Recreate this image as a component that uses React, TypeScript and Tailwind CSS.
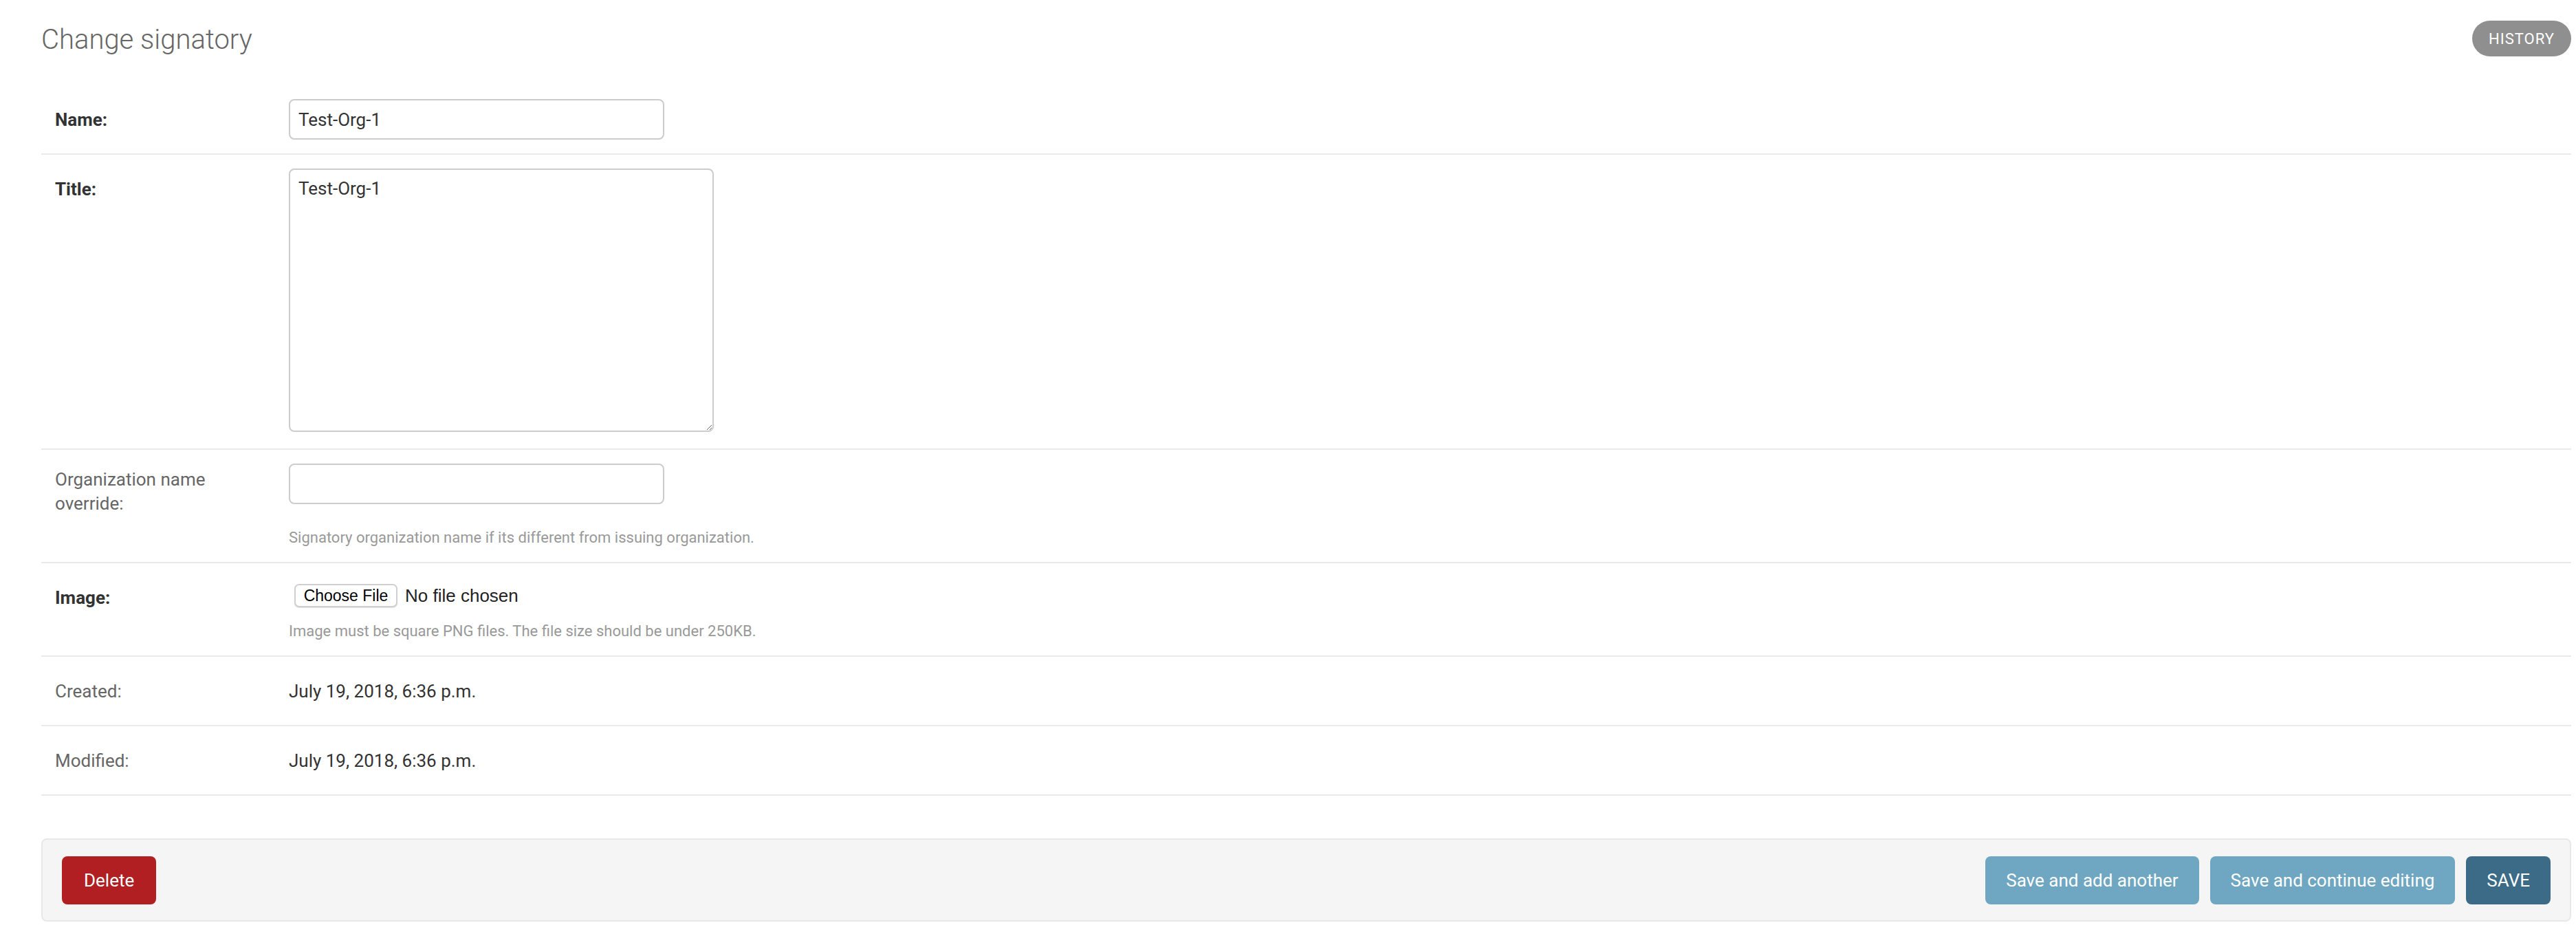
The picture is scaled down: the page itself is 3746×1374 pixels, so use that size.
const rowCls = "flex border-b-2 border-[#eaeaea] p-[20px]";
const labelCls = "w-[340px] shrink-0 pr-[20px] leading-[35px]";

function HelpText({ children, className }: { children: string; className: string }) {
  return <p className={`text-[22px] leading-[30px] text-[#999] ${className}`}>{children}</p>;
}

export default function App() {
  return (
    <div className="min-h-screen w-full bg-white pl-[60px] pr-[7px] pt-[30px] font-['Roboto',sans-serif] text-[26px] text-[#333]">
      <div className="flex items-start justify-between">
        <h1 className="mt-[4px] text-[40px] leading-[48px] font-light text-[#666]">Change signatory</h1>
        <a className="flex h-[52px] items-center rounded-full bg-[#8f8f8f] px-[24px] text-[22px] tracking-[1px] text-white uppercase">
          History
        </a>
      </div>

      <form className="mt-[42px]">
        <fieldset>
          <div className={rowCls}>
            <label className={`${labelCls} pt-[13px] font-bold text-[#333]`}>Name:</label>
            <input
              type="text"
              defaultValue="Test-Org-1"
              className="h-[59px] w-[546px] rounded-[8px] border-2 border-[#cccccc] px-[12px] text-[26px] text-[#333] outline-none"
            />
          </div>

          <div className={rowCls}>
            <label className={`${labelCls} pt-[13px] font-bold text-[#333]`}>Title:</label>
            <div className="h-[387px]">
              <textarea
                defaultValue="Test-Org-1"
                className="block h-[383px] w-[618px] rounded-[8px] border-2 border-[#cccccc] px-[12px] pt-[10px] text-[26px] leading-[34px] text-[#333] outline-none"
              />
            </div>
          </div>

          <div className={rowCls}>
            <label className={`${labelCls} pt-[6px] text-[#666]`}>Organization name override:</label>
            <div className="flex flex-col">
              <input
                type="text"
                className="h-[59px] w-[546px] rounded-[8px] border-2 border-[#cccccc] px-[12px] text-[26px] text-[#333] outline-none"
              />
              <HelpText className="mt-[34px]">Signatory organization name if its different from issuing organization.</HelpText>
            </div>
          </div>

          <div className={rowCls}>
            <label className={`${labelCls} pt-[13px] font-bold text-[#333]`}>Image:</label>
            <div className="flex flex-col">
              <div className="mt-[10px] flex h-[34px] items-center font-['Liberation_Sans',Arial,sans-serif]">
                <button
                  type="button"
                  className="ml-[8px] flex h-[34px] w-[150px] items-center justify-center rounded-[7px] border-2 border-[#d0d0d0] bg-white text-[23px] text-black shadow-[0_1px_1px_rgba(0,0,0,0.12)]"
                >
                  Choose File
                </button>
                <span className="ml-[11px] text-[26px] text-[#222]">No file chosen</span>
              </div>
              <HelpText className="pt-[20px]">Image must be square PNG files. The file size should be under 250KB.</HelpText>
            </div>
          </div>

          <div className={rowCls}>
            <label className={`${labelCls} pt-[13px] text-[#666]`}>Created:</label>
            <div className="h-[59px] pt-[13px] leading-[35px] text-[#333]">July 19, 2018, 6:36 p.m.</div>
          </div>

          <div className={rowCls}>
            <label className={`${labelCls} pt-[13px] text-[#666]`}>Modified:</label>
            <div className="h-[59px] pt-[13px] leading-[35px] text-[#333]">July 19, 2018, 6:36 p.m.</div>
          </div>
        </fieldset>

        <div className="mt-[62px] flex items-center justify-between rounded-[8px] border-2 border-[#e8e8e8] bg-[#f5f5f5] px-[28px] pt-[24px] pb-[23px]">
          <a className="flex h-[70px] items-center rounded-[8px] bg-[#b11f22] px-[32px] text-white">Delete</a>
          <div className="flex gap-[16px]">
            <button type="button" className="h-[70px] rounded-[8px] bg-[#6fa7c2] px-[30px] text-white">
              Save and add another
            </button>
            <button type="button" className="h-[70px] rounded-[8px] bg-[#6fa7c2] px-[30px] text-white">
              Save and continue editing
            </button>
            <button type="button" className="h-[70px] rounded-[8px] bg-[#3b6b86] px-[30px] text-white uppercase">
              Save
            </button>
          </div>
        </div>
      </form>
    </div>
  );
}
